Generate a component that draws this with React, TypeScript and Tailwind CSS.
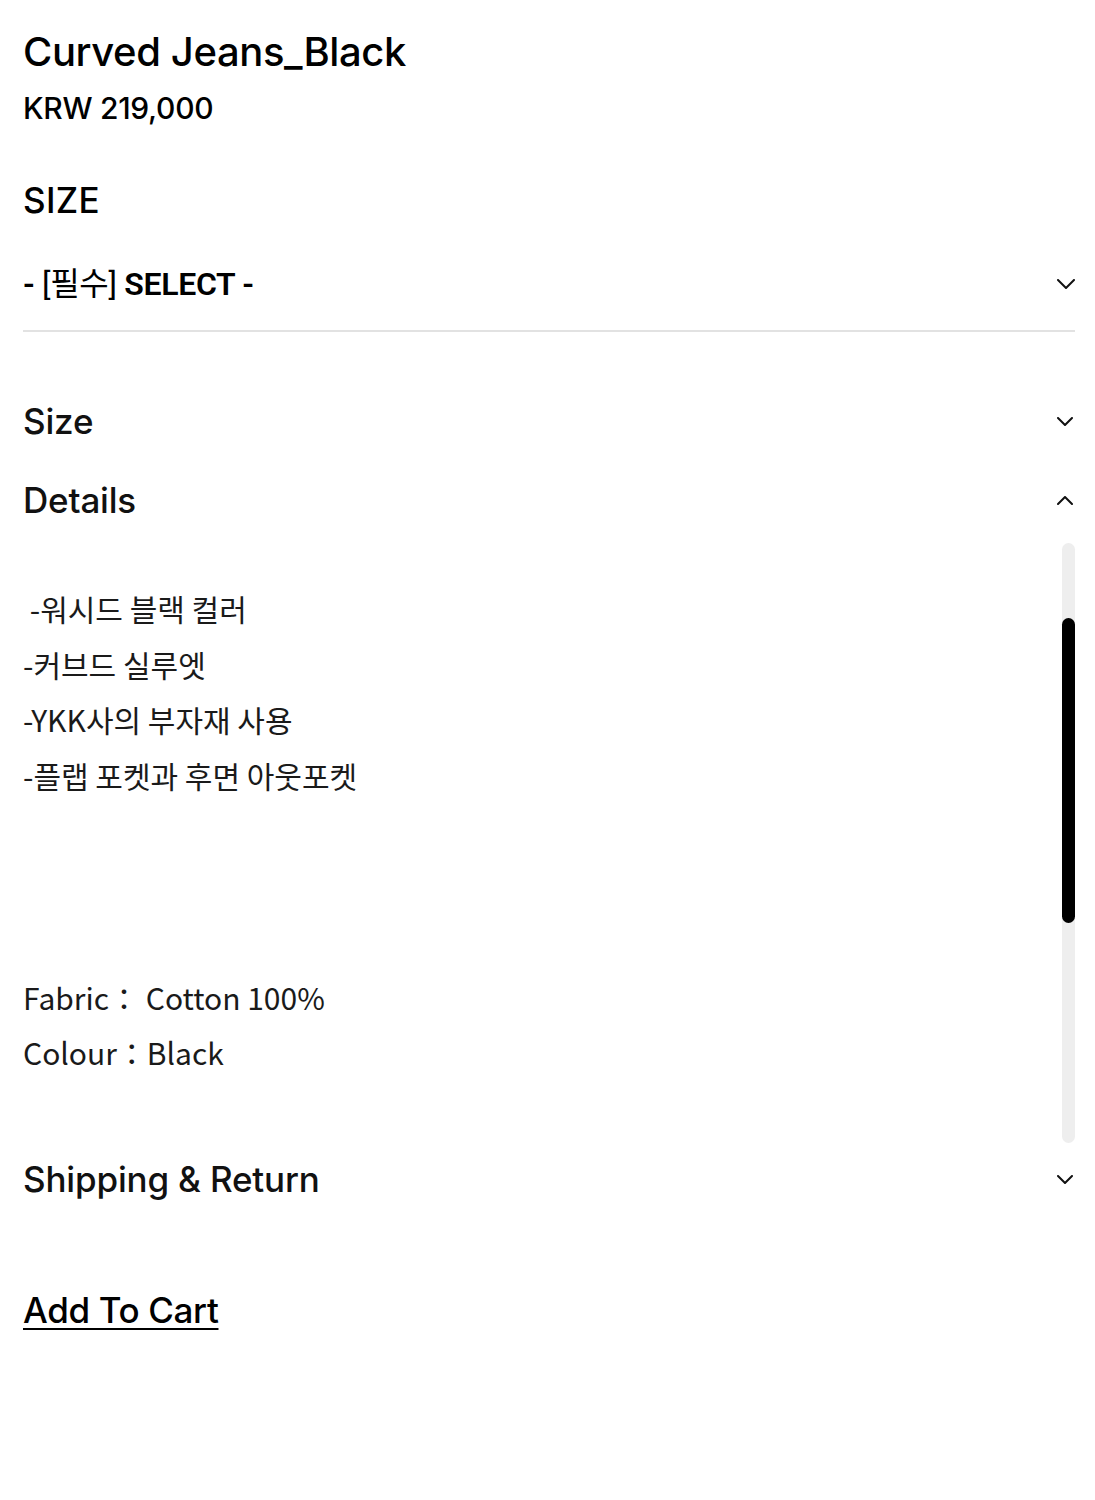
import { useState } from 'react'

const head = { fontFamily: 'Inter, "Liberation Sans", "Noto Sans CJK KR", sans-serif' }
const body = { fontFamily: '"Noto Sans CJK KR", "Noto Sans", sans-serif' }

function Chevron({ up = false, w = 16, h = 9 }: { up?: boolean; w?: number; h?: number }) {
  return (
    <svg width={w} height={h} viewBox={`0 0 ${w} ${h}`} fill="none" className="shrink-0">
      <polyline
        points={up ? `1,${h - 1} ${w / 2},1 ${w - 1},${h - 1}` : `1,1 ${w / 2},${h - 1} ${w - 1},1`}
        stroke="#111"
        strokeWidth={2}
        strokeLinecap="round"
        strokeLinejoin="round"
      />
    </svg>
  )
}

function AccordionRow({ title, open, onToggle, className = 'h-[79px]' }: { title: string; open?: boolean; onToggle: () => void; className?: string }) {
  return (
    <button onClick={onToggle} className={`flex w-full items-center justify-between text-left ${className}`}>
      <span className="text-[35px] font-medium tracking-[-0.005em] text-[#111]" style={head}>{title}</span>
      <span className="pr-[2px]"><Chevron up={open} /></span>
    </button>
  )
}

export default function App() {
  const [open, setOpen] = useState<string | null>('details')
  const toggle = (k: string) => setOpen(open === k ? null : k)

  const lines = [' -워시드 블랙 컬러', '-커브드 실루엣', '-YKK사의 부자재 사용', '-플랩 포켓과 후면 아웃포켓', '', '', '', 'Fabric： Cotton 100%', 'Colour：Black']

  return (
    <div className="w-[1095px] min-h-[1500px] bg-white pl-[23px] pr-[20px] pt-[26px]">
      {/* product heading */}
      <h1 className="text-[40px] leading-[52px] font-medium tracking-[-0.01em] text-black" style={head}>Curved Jeans_Black</h1>
      <div className="text-[30px] leading-[40px] font-medium tracking-[-0.01em] text-black mt-[10px]" style={head}>KRW 219,000</div>

      {/* option */}
      <div className="mt-[50px] text-[35px] leading-[44px] font-medium tracking-[0.01em] text-black" style={head}>SIZE</div>
      <div className="mt-[42px] flex items-center justify-between pb-[26px] border-b-2 border-[#e2e2e2]">
        <span className="text-[32px] leading-[40px] font-semibold tracking-[-0.01em] text-black" style={{ fontFamily: 'Roboto, "Noto Sans CJK KR", sans-serif' }}>
          - <span className="font-normal">[필수]</span> SELECT -
        </span>
        <Chevron w={18} h={10} />
      </div>

      {/* accordions */}
      <div className="mt-[50px]">
        <AccordionRow title="Size" open={open === 'size'} onToggle={() => toggle('size')} />
        <AccordionRow title="Details" open={open === 'details'} onToggle={() => toggle('details')} />
        {open === 'details' && (
          <div className="flex h-[600px] mt-[3px]">
            <div className="flex-1 overflow-hidden pt-[38px]">
              {lines.map((l, i) => (
                <div key={i} className="text-[30px] leading-[55.5px] h-[55.5px] text-[#1a1a1a] whitespace-pre" style={body}>{l}</div>
              ))}
            </div>
            <div className="w-[13px] h-full rounded-full bg-[#eeeeee] flex flex-col">
              <div className="h-[75px] shrink-0" />
              <div className="h-[305px] rounded-full bg-black" />
            </div>
          </div>
        )}
        <AccordionRow title="Shipping & Return" open={open === 'shipping'} onToggle={() => toggle('shipping')} className="h-[73px]" />
      </div>

      <button className="mt-[72px] text-[35px] leading-[44px] font-medium tracking-[-0.01em] text-black underline decoration-2 underline-offset-[5px]" style={head}>
        Add To Cart
      </button>
    </div>
  )
}
